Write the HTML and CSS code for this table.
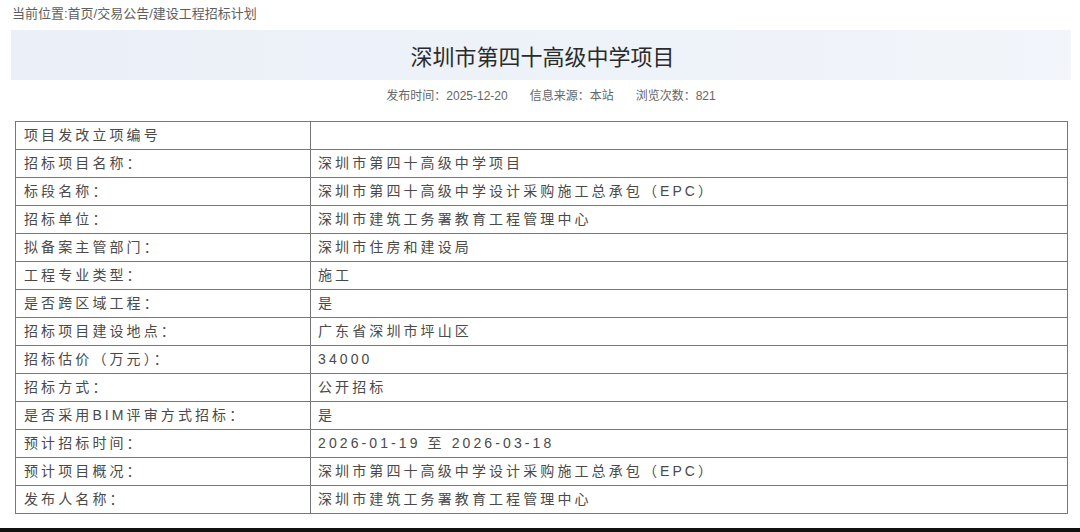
FILE: index.html
```html
<!DOCTYPE html>
<html lang="zh-CN">
<head>
<meta charset="utf-8">
<title>深圳市第四十高级中学项目</title>
<link rel="stylesheet" href="styles.css">
</head>
<body>
<div class="page">
  <div class="crumb">当前位置:首页/交易公告/建设工程招标计划</div>
  <div class="banner"><h1 class="title">深圳市第四十高级中学项目</h1></div>
  <div class="meta"><span>发布时间：2025-12-20</span><span>信息来源：本站</span><span>浏览次数：821</span></div>
  <table class="info">
    <tr><td class="k">项目发改立项编号</td><td class="v"></td></tr>
    <tr><td class="k">招标项目名称：</td><td class="v">深圳市第四十高级中学项目</td></tr>
    <tr><td class="k">标段名称：</td><td class="v">深圳市第四十高级中学设计采购施工总承包（EPC）</td></tr>
    <tr><td class="k">招标单位：</td><td class="v">深圳市建筑工务署教育工程管理中心</td></tr>
    <tr><td class="k">拟备案主管部门：</td><td class="v">深圳市住房和建设局</td></tr>
    <tr><td class="k">工程专业类型：</td><td class="v">施工</td></tr>
    <tr><td class="k">是否跨区域工程：</td><td class="v">是</td></tr>
    <tr><td class="k">招标项目建设地点：</td><td class="v">广东省深圳市坪山区</td></tr>
    <tr><td class="k">招标估价（万元）：</td><td class="v">34000</td></tr>
    <tr><td class="k">招标方式：</td><td class="v">公开招标</td></tr>
    <tr><td class="k">是否采用BIM评审方式招标：</td><td class="v">是</td></tr>
    <tr><td class="k">预计招标时间：</td><td class="v">2026-01-19 至 2026-03-18</td></tr>
    <tr><td class="k">预计项目概况：</td><td class="v">深圳市第四十高级中学设计采购施工总承包（EPC）</td></tr>
    <tr><td class="k">发布人名称：</td><td class="v">深圳市建筑工务署教育工程管理中心</td></tr>
  </table>
</div>
<div class="bottom-bar"></div>
</body>
</html>
```

FILE: styles.css
```css
html, body {
  margin: 0;
  padding: 0;
  background: #fff;
  font-family: "Liberation Sans", "Noto Sans CJK SC", sans-serif;
  height: 532px;
  overflow: hidden;
  position: relative;
}

.page {
  padding: 5px 9px 0 11px;
}

.crumb {
  font-size: 13px;
  line-height: 18px;
  color: #5e5e5e;
  padding-left: 1px;
  height: 25px;
}

.banner {
  height: 50px;
  display: flex;
  align-items: center;
  justify-content: center;
  background: linear-gradient(90deg, #ebeff7 0%, #eef2f9 60%, #f2f5fa 100%);
}

.title {
  margin: 0;
  font-size: 22px;
  font-weight: normal;
  color: #2b2b2b;
  padding-left: 3px;
}

.meta {
  display: flex;
  justify-content: center;
  gap: 22px;
  font-size: 12px;
  line-height: 16px;
  color: #666;
  margin-top: 8px;
  padding-left: 20px;
}

.info {
  margin-top: 17px;
  margin-left: 4px;
  width: 1053px;
  border-collapse: collapse;
  table-layout: fixed;
  font-size: 14px;
  letter-spacing: 3.1px;
  color: #4a4a4a;
}

.info td {
  border: 1px solid #777;
  height: 27px;
  padding: 0 0 0 7px;
  line-height: 27px;
  white-space: nowrap;
  box-sizing: border-box;
}

.info td.k {
  width: 295px;
  padding-left: 8px;
}

.bottom-bar {
  position: absolute;
  left: 0;
  right: 0;
  bottom: 0;
  height: 4px;
  background: #111;
}
```
